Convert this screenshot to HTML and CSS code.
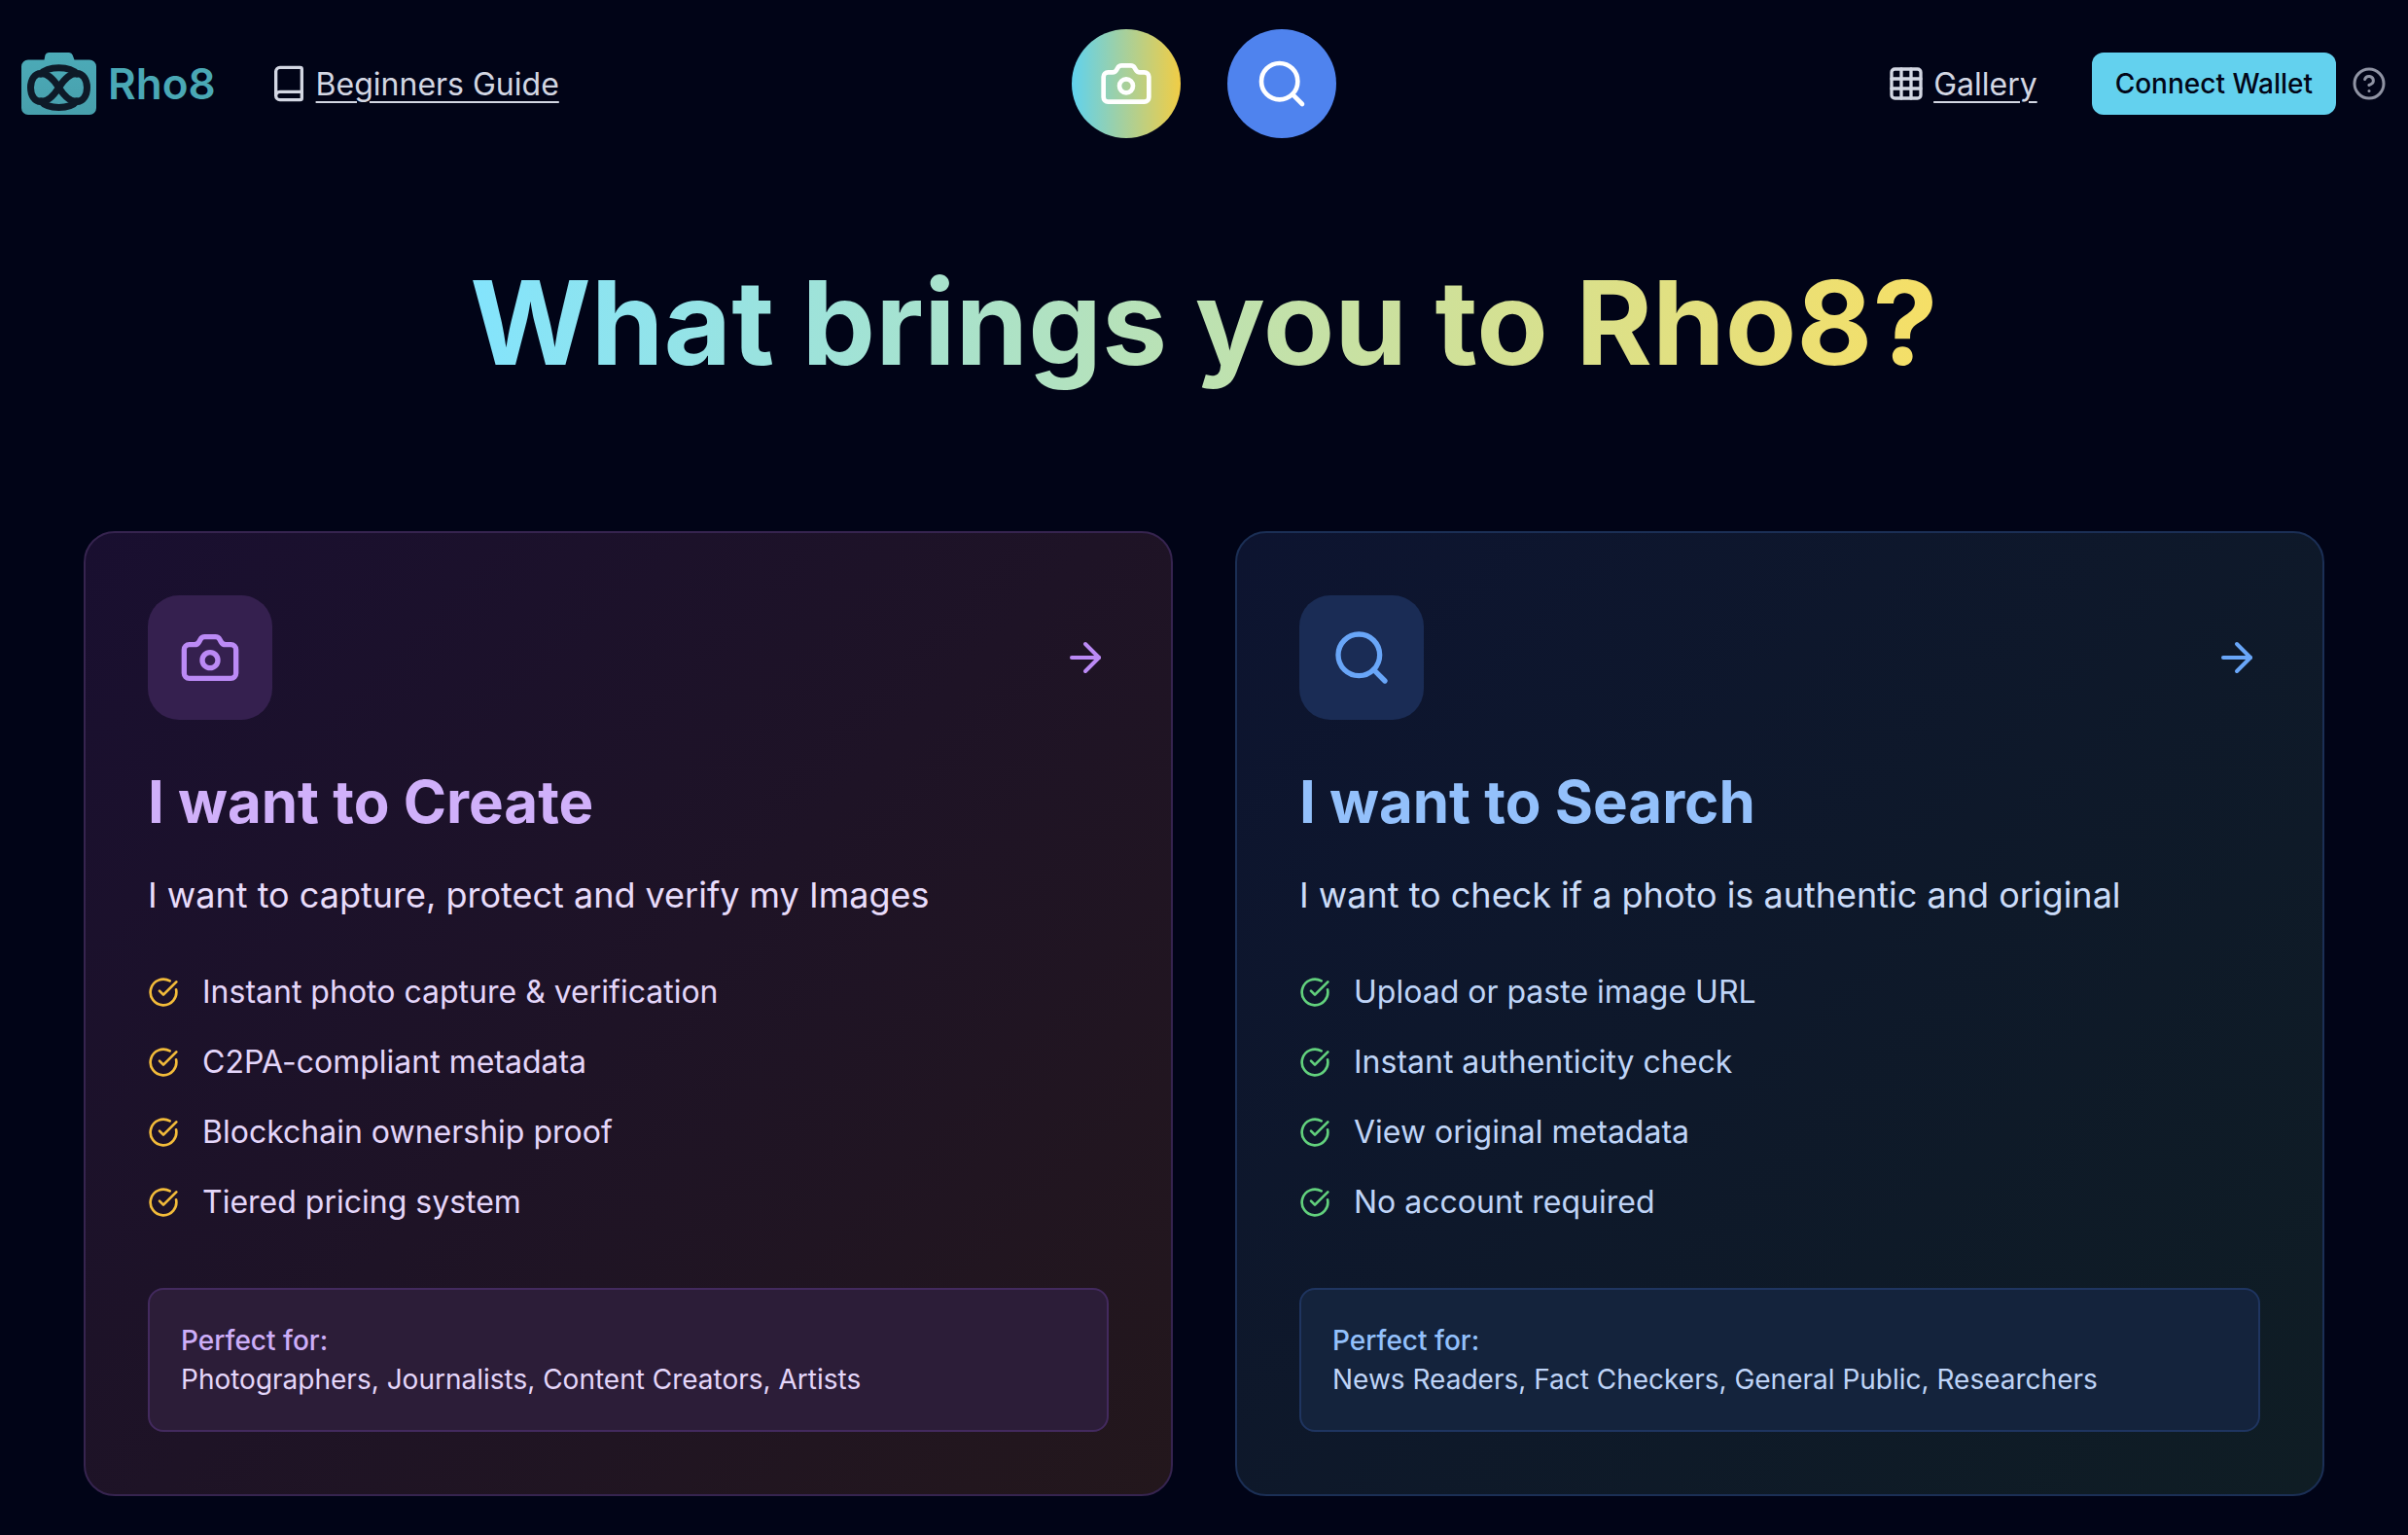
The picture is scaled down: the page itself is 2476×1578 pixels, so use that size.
FILE: index.html

```html
<!DOCTYPE html>
<html>
<head>
<meta charset="utf-8" />
<title>Rho8</title>
<link rel="stylesheet" href="styles.css">
</head>
<body>

<nav class="nav">
	<div class="nav-left">
		<a class="brand">
			<svg class="brand-logo" viewBox="0 0 77 64">
				<defs>
					<linearGradient id="logoFill" x1="0" y1="0" x2="0" y2="1">
						<stop offset="0" stop-color="#4cabb8"/>
						<stop offset="1" stop-color="#479fac"/>
					</linearGradient>
				</defs>
				<path fill="url(#logoFill)" d="M28 0h21a4 4 0 0 1 3.6 2.6L54.5 7.500H70a7 7 0 0 1 7 7V57a7 7 0 0 1-7 7H7a7 7 0 0 1-7-7V14.500a7 7 0 0 1 7-7h16.500l1-4.900A4 4 0 0 1 28 0z"/>
				<path class="logo-ring" d="M38.500 36C33.500 28 28 21.500 20 21.500C13.500 21.500 9.500 28 9.500 36S13.500 50.500 20 50.500C28 50.500 33.500 44 38.500 36C43.500 28 49 21.500 57 21.500C63.500 21.500 67.500 28 67.500 36S63.500 50.500 57 50.500C49 50.500 43.500 44 38.500 36Z"/>
				<path class="logo-ring" d="M20 22C27 13.500 50 13.500 57 22M20 50C27 58.500 50 58.500 57 50"/>
			</svg>
			<span class="brand-name">Rho8</span>
		</a>
		<a class="nav-link">
			<svg class="icon-nav" viewBox="0 0 24 24"><path d="M4 19.500v-15A2.500 2.500 0 0 1 6.500 2H19a1 1 0 0 1 1 1v18a1 1 0 0 1-1 1H6.500a1 1 0 0 1 0-5H20"/></svg>
			<span>Beginners Guide</span>
		</a>
	</div>

	<div class="nav-center">
		<a class="round-btn round-camera">
			<svg class="icon-round" viewBox="0 0 24 24"><path d="M13.997 4a2 2 0 0 1 1.76 1.05l.486.9A2 2 0 0 0 18.003 7H20a2 2 0 0 1 2 2v9a2 2 0 0 1-2 2H4a2 2 0 0 1-2-2V9a2 2 0 0 1 2-2h1.997a2 2 0 0 0 1.759-1.048l.489-.904A2 2 0 0 1 10.004 4z"/><circle cx="12" cy="13" r="3"/></svg>
		</a>
		<a class="round-btn round-search">
			<svg class="icon-round" viewBox="0 0 24 24"><path d="m21 21-4.34-4.34"/><circle cx="11" cy="11" r="8"/></svg>
		</a>
	</div>

	<div class="nav-right">
		<a class="nav-link">
			<svg class="icon-nav" viewBox="0 0 24 24"><rect x="3" y="3" width="18" height="18" rx="2"/><path d="M3 9h18"/><path d="M3 15h18"/><path d="M9 3v18"/><path d="M15 3v18"/></svg>
			<span>Gallery</span>
		</a>
		<button class="wallet-btn">Connect Wallet</button>
		<svg class="icon-help" viewBox="0 0 24 24"><circle cx="12" cy="12" r="10"/><path d="M9.090 9a3 3 0 0 1 5.830 1c0 2-3 3-3 3"/><path d="M12 17h.01"/></svg>
	</div>
</nav>

<main class="main">
	<h1 class="hero">What brings you to Rho8?</h1>

	<div class="cards">

		<section class="card card-create">
			<div class="card-top">
				<div class="card-icon">
					<svg viewBox="0 0 24 24"><path d="M13.997 4a2 2 0 0 1 1.76 1.05l.486.9A2 2 0 0 0 18.003 7H20a2 2 0 0 1 2 2v9a2 2 0 0 1-2 2H4a2 2 0 0 1-2-2V9a2 2 0 0 1 2-2h1.997a2 2 0 0 0 1.759-1.048l.489-.904A2 2 0 0 1 10.004 4z"/><circle cx="12" cy="13" r="3"/></svg>
				</div>
				<svg class="card-arrow" viewBox="0 0 24 24"><path d="M5 12h14"/><path d="m12 5 7 7-7 7"/></svg>
			</div>
			<h2 class="card-title">I want to Create</h2>
			<p class="card-desc">I want to capture, protect and verify my Images</p>
			<ul class="checks">
				<li><svg viewBox="0 0 24 24"><path d="M21.801 10A10 10 0 1 1 17 3.335"/><path d="m9 11 3 3L22 4"/></svg>Instant photo capture &amp; verification</li>
				<li><svg viewBox="0 0 24 24"><path d="M21.801 10A10 10 0 1 1 17 3.335"/><path d="m9 11 3 3L22 4"/></svg>C2PA-compliant metadata</li>
				<li><svg viewBox="0 0 24 24"><path d="M21.801 10A10 10 0 1 1 17 3.335"/><path d="m9 11 3 3L22 4"/></svg>Blockchain ownership proof</li>
				<li><svg viewBox="0 0 24 24"><path d="M21.801 10A10 10 0 1 1 17 3.335"/><path d="m9 11 3 3L22 4"/></svg>Tiered pricing system</li>
			</ul>
			<div class="perfect">
				<div class="perfect-label">Perfect for:</div>
				<div class="perfect-text">Photographers, Journalists, Content Creators, Artists</div>
			</div>
		</section>

		<section class="card card-search">
			<div class="card-top">
				<div class="card-icon">
					<svg viewBox="0 0 24 24"><path d="m21 21-4.34-4.34"/><circle cx="11" cy="11" r="8"/></svg>
				</div>
				<svg class="card-arrow" viewBox="0 0 24 24"><path d="M5 12h14"/><path d="m12 5 7 7-7 7"/></svg>
			</div>
			<h2 class="card-title">I want to Search</h2>
			<p class="card-desc">I want to check if a photo is authentic and original</p>
			<ul class="checks">
				<li><svg viewBox="0 0 24 24"><path d="M21.801 10A10 10 0 1 1 17 3.335"/><path d="m9 11 3 3L22 4"/></svg>Upload or paste image URL</li>
				<li><svg viewBox="0 0 24 24"><path d="M21.801 10A10 10 0 1 1 17 3.335"/><path d="m9 11 3 3L22 4"/></svg>Instant authenticity check</li>
				<li><svg viewBox="0 0 24 24"><path d="M21.801 10A10 10 0 1 1 17 3.335"/><path d="m9 11 3 3L22 4"/></svg>View original metadata</li>
				<li><svg viewBox="0 0 24 24"><path d="M21.801 10A10 10 0 1 1 17 3.335"/><path d="m9 11 3 3L22 4"/></svg>No account required</li>
			</ul>
			<div class="perfect">
				<div class="perfect-label">Perfect for:</div>
				<div class="perfect-text">News Readers, Fact Checkers, General Public, Researchers</div>
			</div>
		</section>

	</div>
</main>

</body>
</html>
```

FILE: styles.css

```css
* {
	box-sizing: border-box;
}
html, body {
	margin: 0;
	height: 100%;
}
body {
	background: #010417;
	font-family: Inter, "Liberation Sans", sans-serif;
	overflow: hidden;
}
svg {
	display: block;
	fill: none;
	stroke: currentColor;
	stroke-width: 2;
	stroke-linecap: round;
	stroke-linejoin: round;
	flex: none;
}

/* top bar */
.nav {
	display: grid;
	grid-template-columns: 1fr auto 1fr;
	align-items: center;
	padding: 30px 22px 30px 22px;
}
.nav-left, .nav-right, .nav-center {
	display: flex;
	align-items: center;
}
.nav-left {
	gap: 55px;
}
.nav-center {
	gap: 48px;
}
.nav-right {
	justify-content: flex-end;
}
.brand {
	display: flex;
	align-items: center;
	gap: 12px;
}
.brand-logo {
	width: 77px;
	height: 64px;
	stroke: none;
}
.logo-ring {
	fill: none;
	stroke: #0e1a28;
	stroke-width: 7;
}
.brand-name {
	font-size: 44px;
	font-weight: 600;
	color: #4aa8b5;
}
.nav-link {
	display: flex;
	align-items: center;
	gap: 8px;
	font-size: 32px;
	font-weight: 400;
	color: #d3d7e3;
	text-decoration: none;
}
.nav-link span {
	text-decoration: underline;
	text-underline-offset: 6px;
	text-decoration-thickness: 2px;
}
.icon-nav {
	width: 40px;
	height: 40px;
}
.round-btn {
	display: flex;
	align-items: center;
	justify-content: center;
	width: 112px;
	height: 112px;
	border-radius: 50%;
	color: #fff;
}
.round-camera {
	background: linear-gradient(to right, #60d2ee, #f1cd45);
}
.round-search {
	background: #4f83ee;
}
.icon-round {
	width: 56px;
	height: 56px;
}
.wallet-btn {
	height: 64px;
	margin-left: 56px;
	padding: 0 24px;
	border: 0;
	border-radius: 12px;
	background: #63d1ee;
	color: #020617;
	font-family: inherit;
	font-size: 28px;
	font-weight: 500;
}
.icon-help {
	width: 36px;
	height: 36px;
	margin-left: 16px;
	color: #8f93a3;
}

/* heading */
.hero {
	width: max-content;
	margin: 100px auto 134px;
	padding-bottom: 20px;
	font-size: 120px;
	line-height: 120px;
	font-weight: 700;
	background: linear-gradient(to right, #83e4fd, #f6df66);
	-webkit-background-clip: text;
	background-clip: text;
	color: transparent;
}

/* cards */
.cards {
	display: grid;
	grid-template-columns: 1fr 1fr;
	gap: 64px;
	width: 2304px;
	margin: 0 auto;
}
.card {
	padding: 64px;
	border: 2px solid;
	border-radius: 32px;
}
.card-create {
	background: linear-gradient(135deg, #190f30, #23171c);
	border-color: #36244f;
}
.card-search {
	background: linear-gradient(135deg, #0d1430, #0f1d24);
	border-color: #1b2f55;
}
.card-top {
	display: flex;
	align-items: center;
	justify-content: space-between;
	margin-bottom: 48px;
}
.card-icon {
	display: flex;
	align-items: center;
	justify-content: center;
	width: 128px;
	height: 128px;
	border-radius: 32px;
}
.card-icon svg {
	width: 64px;
	height: 64px;
}
.card-arrow {
	width: 48px;
	height: 48px;
}
.card-title {
	margin: 0 0 32px;
	font-size: 60px;
	line-height: 72px;
	font-weight: 700;
}
.card-desc {
	margin: 0 0 48px;
	font-size: 36px;
	line-height: 56px;
	font-weight: 400;
}
.checks {
	display: flex;
	flex-direction: column;
	gap: 24px;
	margin: 0 0 64px;
	padding: 0;
	list-style: none;
}
.checks li {
	display: flex;
	align-items: center;
	gap: 24px;
	font-size: 32px;
	line-height: 48px;
	font-weight: 400;
}
.checks svg {
	width: 32px;
	height: 32px;
}
.perfect {
	padding: 32px;
	border: 2px solid;
	border-radius: 16px;
	font-size: 28px;
	line-height: 40px;
	font-weight: 400;
}
.perfect-label {
	font-weight: 500;
}

.card-create .card-icon { background: #35204f; color: #bb8af5; }
.card-create .card-arrow { color: #bb8af5; }
.card-create .card-title { color: #d0b0fa; }
.card-create .card-desc { color: #e8dcfb; }
.card-create .checks { color: #e4d6fa; }
.card-create .checks svg { color: #f3bc3a; }
.card-create .perfect { background: #2c1d38; border-color: #432a5e; color: #e4d6fa; }
.card-create .perfect-label { color: #cdaef8; }

.card-search .card-icon { background: #1a2c55; color: #69a6f8; }
.card-search .card-arrow { color: #69a6f8; }
.card-search .card-title { color: #93c0fb; }
.card-search .card-desc { color: #cbdcf9; }
.card-search .checks { color: #bfd4f7; }
.card-search .checks svg { color: #62d17d; }
.card-search .perfect { background: #14233c; border-color: #1f3560; color: #bfd4f7; }
.card-search .perfect-label { color: #93c0fb; }
```
